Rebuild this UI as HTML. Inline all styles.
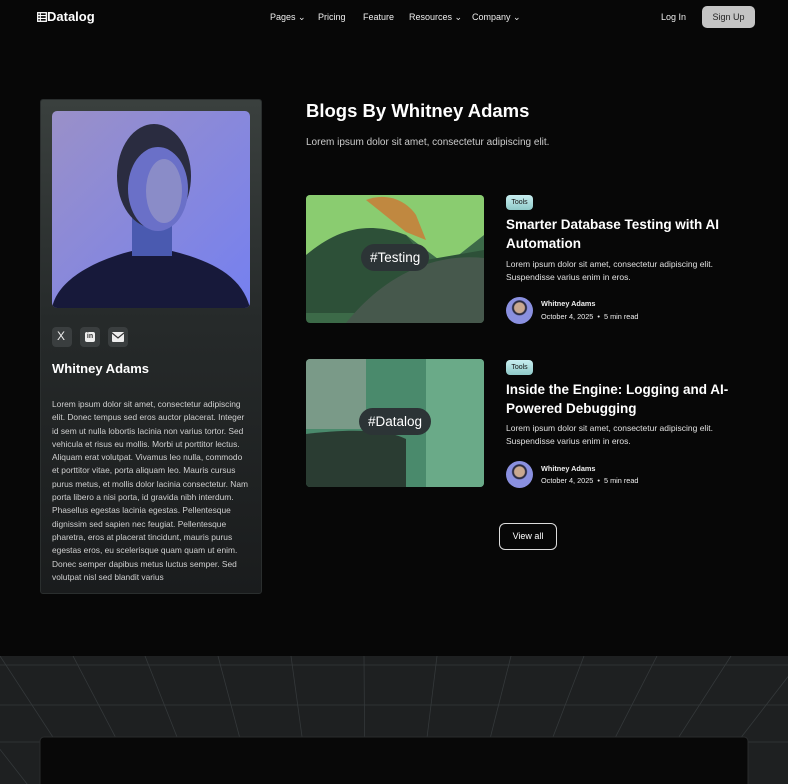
<!DOCTYPE html>
<html><head><meta charset="utf-8"><style>
*{margin:0;padding:0;box-sizing:border-box}
body{width:788px;height:784px;overflow:hidden;background:#070707;font-family:"Liberation Sans",sans-serif;color:#fff;position:relative}
.a{position:absolute;white-space:nowrap}
.nav{font-size:9px;top:12px;color:#eee}
.card{position:absolute;left:40px;top:99px;width:222px;height:495px;background:linear-gradient(#3a403e,#262a2a 45%,#1a1c1d);border:1px solid #2a2e2e;border-radius:3px}
.ic{position:absolute;top:327px;width:20px;height:20px;background:#3a3e3f;border-radius:4px}
.bio{position:absolute;left:52px;top:398px;width:196px;font-size:8.4px;line-height:13.3px;color:#d0d0d0}
.tag{position:absolute;left:506px;width:27px;height:15px;background:linear-gradient(#c8eef0,#8fc9c8);border-radius:4px;color:#111;font-size:7px;text-align:center;line-height:15px}
.t{font-size:13.5px;font-weight:bold;line-height:19px;left:506px}
.d{font-size:8.5px;line-height:13px;color:#e0e0e0;left:506px}
.av{position:absolute;left:506px;width:27px;height:27px;border-radius:50%;background:radial-gradient(circle at 50% 40%,#c9a890 0 5px,#2a2a40 6px 7px,#8a90e0 8px);overflow:hidden}
.m{font-size:7.3px;left:541px;color:#eee}
.pill{position:absolute;background:#2c3436;border-radius:14px;color:#fff;font-size:13.5px;padding:6px 9px}
</style></head><body>
<div class="a" style="left:37px;top:9px;font-size:13px;font-weight:bold">
<svg width="10" height="10" viewBox="0 0 10 10" style="vertical-align:-1px"><rect x=".7" y=".7" width="8.6" height="8.6" fill="none" stroke="#fff" stroke-width="1.3"/><path d="M.7 3.6h8.6M.7 6.4h8.6M3.3 .7v8.6" stroke="#fff" stroke-width="1.1"/></svg>Datalog</div>
<div class="a nav" style="left:270px">Pages ⌄</div>
<div class="a nav" style="left:318px">Pricing</div>
<div class="a nav" style="left:363px">Feature</div>
<div class="a nav" style="left:409px">Resources ⌄</div>
<div class="a nav" style="left:472px">Company ⌄</div>
<div class="a nav" style="left:661px">Log In</div>
<div class="a" style="left:702px;top:6px;width:53px;height:22px;background:#c4c4c4;border-radius:5px;color:#222;font-size:9px;text-align:center;line-height:22px">Sign Up</div>

<div class="card"></div>
<svg class="a" style="left:52px;top:111px;border-radius:5px" width="198" height="197" viewBox="0 0 198 197">
<defs><linearGradient id="bg" x1="0" y1="0" x2="1" y2="1"><stop offset="0" stop-color="#9a90c8"/><stop offset="1" stop-color="#7580f0"/></linearGradient></defs>
<rect width="198" height="197" fill="url(#bg)"/>
<path d="M0 197 C5 170 40 150 80 140 L120 140 C160 150 190 165 198 197Z" fill="#17193a"/>
<rect x="80" y="100" width="40" height="45" fill="#4a5ab0"/>
<ellipse cx="102" cy="65" rx="37" ry="52" fill="#2a2c40"/>
<ellipse cx="106" cy="78" rx="30" ry="42" fill="#6a70c8"/>
<ellipse cx="112" cy="80" rx="18" ry="32" fill="#8a8cc8"/>
</svg>
<div class="ic" style="left:52px"><div class="a" style="left:5px;top:2px;font-size:12px;color:#eee">X</div></div>
<div class="ic" style="left:80px"><div class="a" style="left:5px;top:5px;width:10px;height:10px;background:#eee;border-radius:2px;color:#333;font-size:7px;font-weight:bold;line-height:10px;text-align:center">in</div></div>
<div class="ic" style="left:108px"><svg class="a" style="left:4px;top:5px" width="12" height="10"><rect width="12" height="10" rx="1" fill="#eee"/><path d="M0 1l6 5 6-5" stroke="#333" fill="none" stroke-width="1.2"/></svg></div>
<div class="a" style="left:52px;top:361px;font-size:13px;font-weight:bold">Whitney Adams</div>
<div class="bio">Lorem ipsum dolor sit amet, consectetur adipiscing elit. Donec tempus sed eros auctor placerat. Integer id sem ut nulla lobortis lacinia non varius tortor. Sed vehicula et risus eu mollis. Morbi ut porttitor lectus. Aliquam erat volutpat. Vivamus leo nulla, commodo et porttitor vitae, porta aliquam leo. Mauris cursus purus metus, et mollis dolor lacinia consectetur. Nam porta libero a nisi porta, id gravida nibh interdum. Phasellus egestas lacinia egestas. Pellentesque dignissim sed sapien nec feugiat. Pellentesque pharetra, eros at placerat tincidunt, mauris purus egestas eros, eu scelerisque quam quam ut enim. Donec semper dapibus metus luctus semper. Sed volutpat nisl sed blandit varius</div>

<div class="a" style="left:306px;top:100px;font-size:18.5px;font-weight:bold">Blogs By Whitney Adams</div>
<div class="a" style="left:306px;top:137px;font-size:10px;color:#ccc">Lorem ipsum dolor sit amet, consectetur adipiscing elit.</div>

<svg class="a" style="left:306px;top:195px;border-radius:4px" width="178" height="128" viewBox="0 0 178 128">
<rect width="178" height="128" fill="#3c6a48"/>
<path d="M0 0h178v40L140 70 100 40 60 35 30 50 0 60Z" fill="#8acc70"/>
<path d="M60 5c20-8 40 0 50 15l10 25-20-8z" fill="#c08840"/>
<path d="M0 60c30-25 60-35 100-20l20 25 58-10v63H0Z" fill="#2d5038"/>
<path d="M40 128c40-50 90-70 138-65v65Z" fill="#46584c"/>
</svg>
<div class="pill" style="left:361px;top:244px">#Testing</div>
<svg class="a" style="left:306px;top:359px;border-radius:4px" width="178" height="128" viewBox="0 0 178 128">
<rect width="178" height="128" fill="#4a8a6c"/>
<rect x="0" width="60" height="70" fill="#7a9a88"/>
<rect x="120" width="58" height="128" fill="#6aaa88"/>
<path d="M0 75c40-5 80-5 100 5v48H0Z" fill="#2a3c32"/>
</svg>
<div class="pill" style="left:359px;top:408px">#Datalog</div>

<div class="tag" style="top:195px">Tools</div>
<div class="a t" style="top:215px">Smarter Database Testing with AI<br>Automation</div>
<div class="a d" style="top:258px">Lorem ipsum dolor sit amet, consectetur adipiscing elit.<br>Suspendisse varius enim in eros.</div>
<div class="av" style="top:297px"></div>
<div class="a m" style="top:299px;font-weight:bold">Whitney Adams</div>
<div class="a m" style="top:312px">October 4, 2025 &nbsp;•&nbsp; 5 min read</div>

<div class="tag" style="top:360px">Tools</div>
<div class="a t" style="top:380px">Inside the Engine: Logging and AI-<br>Powered Debugging</div>
<div class="a d" style="top:422px">Lorem ipsum dolor sit amet, consectetur adipiscing elit.<br>Suspendisse varius enim in eros.</div>
<div class="av" style="top:461px"></div>
<div class="a m" style="top:464px;font-weight:bold">Whitney Adams</div>
<div class="a m" style="top:476px">October 4, 2025 &nbsp;•&nbsp; 5 min read</div>

<div class="a" style="left:499px;top:523px;width:58px;height:27px;border:1px solid #ddd;border-radius:6px;font-size:9px;text-align:center;line-height:25px">View all</div>

<svg class="a" style="left:0;top:656px" width="788" height="128" viewBox="0 656 788 128">
<rect x="0" y="656" width="788" height="128" fill="#1e2021"/>
<g stroke="#34383a" stroke-width="0.8">
<path d="M0 665h788M0 705h788M0 742h788"/>
<path d="M-73 656L368 1220M0 656L368 1220M73 656L368 1220M145 656L368 1220M218 656L368 1220M291 656L368 1220M364 656L368 1220M437 656L368 1220M511 656L368 1220M584 656L368 1220M657 656L368 1220M731 656L368 1220M804 656L368 1220"/>
</g>
<rect x="40" y="737" width="708" height="60" rx="4" fill="#080808" stroke="#2a2c2d"/>
</svg>
</body></html>
